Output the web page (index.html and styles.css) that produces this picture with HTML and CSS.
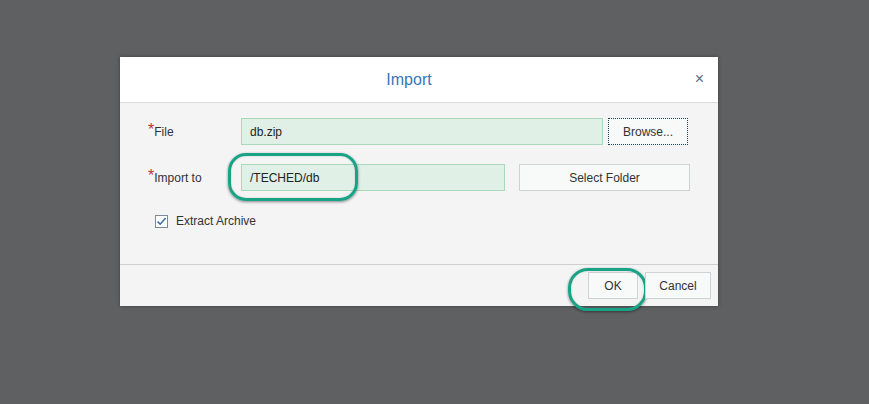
FILE: index.html
```html
<!DOCTYPE html>
<html>
<head>
<meta charset="utf-8">
<link rel="stylesheet" href="styles.css">
</head>
<body>
<div class="dialog">
  <div class="header">
    <span class="title">Import</span>
    <span class="close">×</span>
  </div>
  <div class="content">
    <div class="row">
      <label class="label"><span class="req">*</span>File</label>
      <div class="field file-field">db.zip</div>
      <button class="btn browse">Browse...</button>
    </div>
    <div class="row">
      <label class="label"><span class="req">*</span>Import to</label>
      <div class="field import-field">/TECHED/db<span class="ring ring-import"></span></div>
      <button class="btn folder">Select Folder</button>
    </div>
    <div class="check-row">
      <svg class="cb" width="13" height="13" viewBox="0 0 13 13"><rect x="0.5" y="0.5" width="12" height="12" fill="#fff" stroke="#7a8a99"/><path d="M2.6 6.6 L5.2 9.2 L10.6 3" fill="none" stroke="#3d6e9f" stroke-width="1.6"/></svg>
      <span>Extract Archive</span>
    </div>
  </div>
  <div class="footer">
    <button class="btn ok">OK<span class="ring ring-ok"></span></button>
    <button class="btn cancel">Cancel</button>
  </div>
</div>
</body>
</html>
```
FILE: styles.css
```css
html, body {
  margin: 0;
  padding: 0;
  background: #5f6062;
  width: 869px;
  height: 404px;
  overflow: hidden;
  font-family: "Liberation Sans", Arial, sans-serif;
}
.dialog {
  margin: 57px 0 0 120px;
  width: 598px;
  background: #f4f4f4;
  box-shadow: 0 0 4px rgba(0,0,0,0.35);
}
.header {
  height: 45px;
  background: #fff;
  border-bottom: 1px solid #dcdcdc;
  display: flex;
  align-items: center;
  justify-content: center;
  position: relative;
  padding-right: 20px;
}
.title {
  font-size: 16px;
  color: #3677b8;
  margin-top: 1px;
}
.close {
  position: absolute;
  right: 14px;
  top: 13px;
  font-size: 16px;
  color: #5a6f87;
}
.content {
  height: 162px;
  padding: 15px 0 0 28px;
  box-sizing: border-box;
  border-bottom: 1px solid #cfcfcf;
}
.row {
  display: flex;
  align-items: center;
  height: 27px;
  margin-bottom: 19px;
}
.label {
  width: 93px;
  font-size: 12px;
  color: #333;
}
.req {
  color: #c0362c;
  font-size: 16px;
  line-height: 10px;
  vertical-align: 1px;
}
.field {
  height: 27px;
  box-sizing: border-box;
  background: #e0f0e6;
  border: 1px solid #a9d8ba;
  font-size: 12px;
  color: #222;
  padding-left: 8px;
  display: flex;
  align-items: center;
  position: relative;
}
.file-field { width: 362px; }
.import-field { width: 264px; }
.btn {
  height: 27px;
  box-sizing: border-box;
  background: #f8f9f9;
  border: 1px solid #cfd2d4;
  font-family: "Liberation Sans", Arial, sans-serif;
  font-size: 12px;
  color: #333;
  padding: 0;
  position: relative;
}
.browse {
  width: 80px;
  margin-left: 5px;
  border: 1px dotted #1c3c5a;
}
.folder {
  width: 171px;
  margin-left: 14px;
}
.check-row {
  display: flex;
  align-items: center;
  margin-left: 7px;
  padding-top: 4px;
  font-size: 12px;
  color: #333;
}
.cb { margin-right: 8px; }
.footer {
  height: 41px;
  display: flex;
  align-items: center;
  justify-content: flex-end;
  padding-right: 7px;
}
.ok { width: 50px; }
.cancel { width: 66px; margin-left: 7px; }
.ring {
  position: absolute;
  box-sizing: border-box;
  border: 3px solid #19a386;
  box-shadow: 0 1px 3px rgba(0,0,0,0.45), inset 0 0 2px rgba(0,0,0,0.2);
  pointer-events: none;
}
.ring-import {
  left: -14px;
  top: -12px;
  width: 130px;
  height: 48px;
  border-radius: 18px;
}
.ring-ok {
  left: -21px;
  top: -5px;
  width: 79px;
  height: 43px;
  border-radius: 20px;
}
```
